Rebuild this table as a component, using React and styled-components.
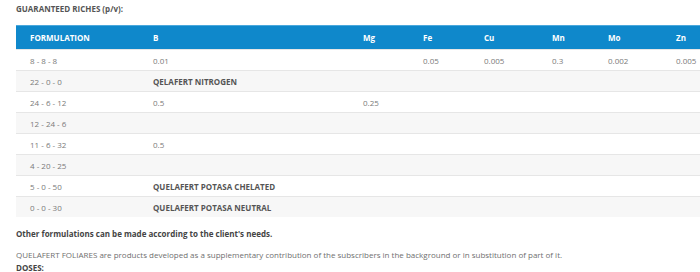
import React from 'react'
import styled, { createGlobalStyle } from 'styled-components'

const Global = createGlobalStyle`
  body {
    margin: 0;
    background: #fff;
    font-family: "Open Sans", "Liberation Sans", sans-serif;
    overflow: hidden;
  }
`

const Page = styled.div`
  padding: 4px 0 0 16px;
  color: #777;
  font-size: 8px;
`

const Title = styled.h4`
  margin: 0 0 11px;
  height: 10px;
  line-height: 10px;
  font-size: 8px;
  font-weight: 700;
  color: #555;
`

const Table = styled.table`
  width: 700px;
  border-collapse: collapse;
  table-layout: fixed;
`

const Head = styled.th`
  background: #0f88cb;
  border-top: 1px solid #4aa8dc;
  color: #fff;
  font-weight: 700;
  text-align: left;
  height: 23px;
  padding: 0 0 0 14px;
  font-size: 8px;
`

const Row = styled.tr`
  background: ${({ $alt }) => ($alt ? '#f7f7f7' : '#fff')};
  border-top: 1px solid #e6e6e6;
`

const Cell = styled.td`
  height: 20px;
  padding: 0 0 0 14px;
  color: ${({ $bold }) => ($bold ? '#555' : '#7a7a7a')};
  font-weight: ${({ $bold }) => ($bold ? 700 : 400)};
  white-space: nowrap;
`

const Note = styled.p`
  margin: ${({ $bold }) => ($bold ? '12px' : '11px')} 0 0;
  line-height: 10px;
  font-weight: ${({ $bold }) => ($bold ? 700 : 400)};
  color: ${({ $bold }) => ($bold ? '#444' : '#6f6f6f')};
`

const Doses = styled.p`
  margin: 3px 0 0;
  line-height: 10px;
  font-weight: 700;
  color: #444;
`

const widths = [123, 210, 60, 61, 68, 56, 68, 54]
const heads = ['FORMULATION', 'B', 'Mg', 'Fe', 'Cu', 'Mn', 'Mo', 'Zn']

const rows = [
  ['8 - 8 - 8', '0.01', '', '0.05', '0.005', '0.3', '0.002', '0.005'],
  ['22 - 0 - 0', { bold: 'QELAFERT NITROGEN' }],
  ['24 - 6 - 12', '0.5', '0.25', '', '', '', '', ''],
  ['12 - 24 - 6', '', '', '', '', '', '', ''],
  ['11 - 6 - 32', '0.5', '', '', '', '', '', ''],
  ['4 - 20 - 25', '', '', '', '', '', '', ''],
  ['5 - 0 - 50', { bold: 'QUELAFERT POTASA CHELATED' }],
  ['0 - 0 - 30', { bold: 'QUELAFERT POTASA NEUTRAL' }],
]

export default function App() {
  return (
    <>
      <Global />
      <Page>
        <Title>GUARANTEED RICHES (p/v):</Title>
        <Table>
          <colgroup>
            {widths.map((w, i) => <col key={i} style={{ width: w }} />)}
          </colgroup>
          <thead>
            <tr>
              {heads.map(h => <Head key={h}>{h}</Head>)}
            </tr>
          </thead>
          <tbody>
            {rows.map((r, i) => (
              <Row key={i} $alt={i % 2 === 1}>
                {r.map((c, j) =>
                  typeof c === 'object'
                    ? [<Cell key={j} $bold>{c.bold}</Cell>, ...Array.from({ length: 6 }, (_, k) => <Cell key={'e' + k} />)]
                    : <Cell key={j}>{c}</Cell>
                )}
              </Row>
            ))}
          </tbody>
        </Table>
        <Note $bold>Other formulations can be made according to the client's needs.</Note>
        <Note>QUELAFERT FOLIARES are products developed as a supplementary contribution of the subscribers in the background or in substitution of part of it.</Note>
        <Doses>DOSES:</Doses>
      </Page>
    </>
  )
}
